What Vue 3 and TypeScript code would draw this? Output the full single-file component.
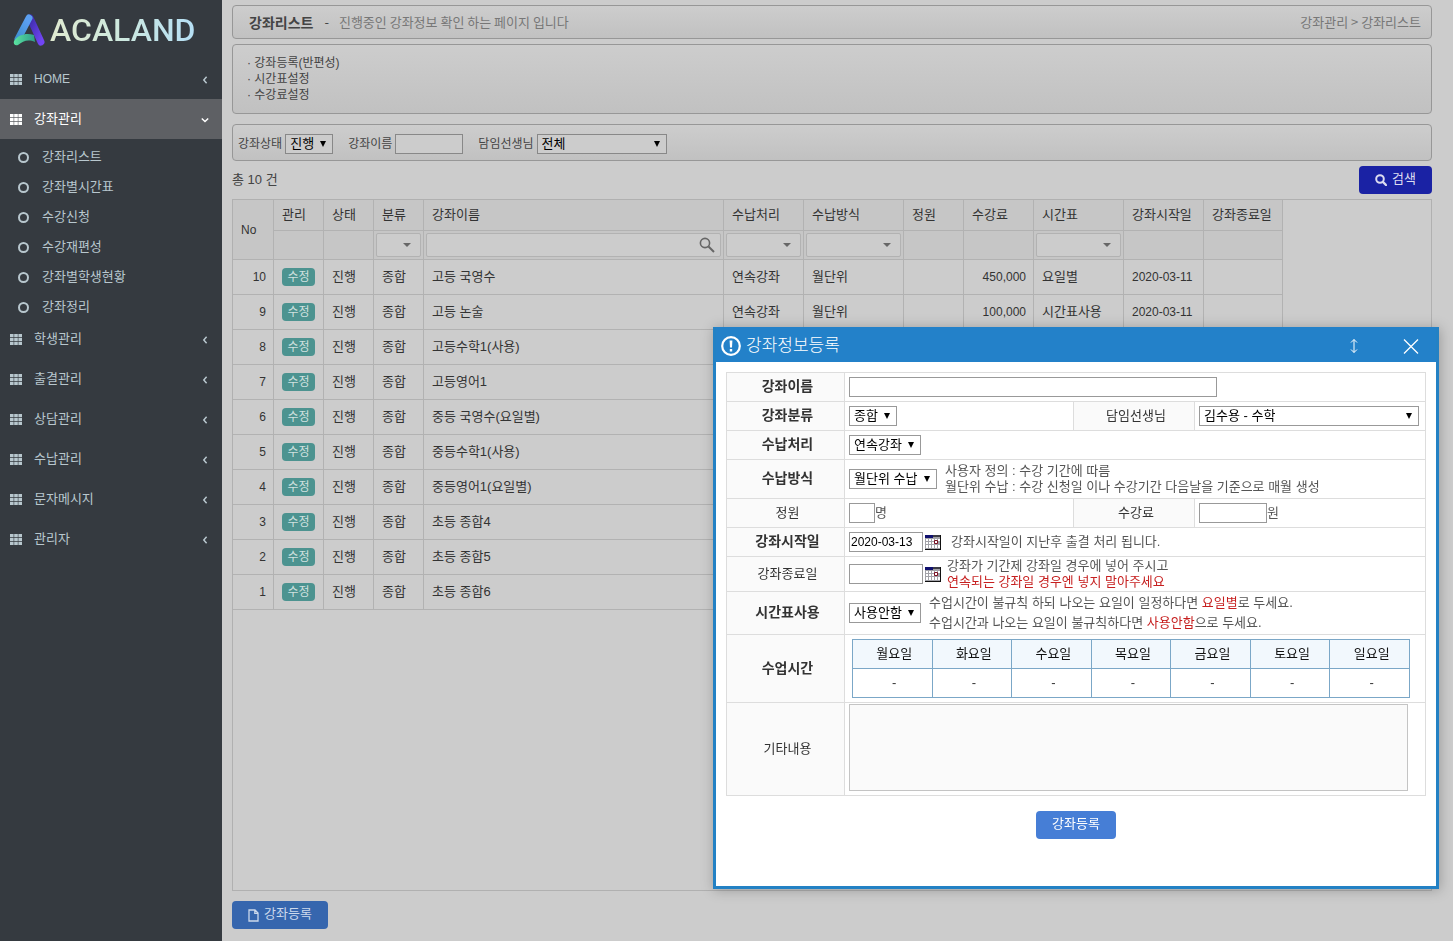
<script setup lang="ts">
import { ref } from 'vue'

interface MenuItem {
  label: string
  open?: boolean
  latin?: boolean
  children?: string[]
}

interface Course {
  no: number
  name: string
  process: string
  method: string
  fee: string
  timetable: string
  start: string
}

const menu: MenuItem[] = [
  { label: 'HOME', latin: true },
  {
    label: '강좌관리',
    open: true,
    children: ['강좌리스트', '강좌별시간표', '수강신청', '수강재편성', '강좌별학생현황', '강좌정리'],
  },
  { label: '학생관리' },
  { label: '출결관리' },
  { label: '상담관리' },
  { label: '수납관리' },
  { label: '문자메시지' },
  { label: '관리자' },
]

const course = (no: number, name: string, fee = '', timetable = ''): Course => ({
  no,
  name,
  process: '연속강좌',
  method: '월단위',
  fee,
  timetable,
  start: '2020-03-11',
})

const courses: Course[] = [
  course(10, '고등 국영수', '450,000', '요일별'),
  course(9, '고등 논술', '100,000', '시간표사용'),
  course(8, '고등수학1(사용)'),
  course(7, '고등영어1'),
  course(6, '중등 국영수(요일별)'),
  course(5, '중등수학1(사용)'),
  course(4, '중등영어1(요일별)'),
  course(3, '초등 종합4'),
  course(2, '초등 종합5'),
  course(1, '초등 종합6'),
]

const columns = [
  { title: '관리', filter: '' },
  { title: '상태', filter: '' },
  { title: '분류', filter: 'select' },
  { title: '강좌이름', filter: 'text' },
  { title: '수납처리', filter: 'select' },
  { title: '수납방식', filter: 'select' },
  { title: '정원', filter: '' },
  { title: '수강료', filter: '' },
  { title: '시간표', filter: 'select' },
  { title: '강좌시작일', filter: '' },
  { title: '강좌종료일', filter: '' },
]

const days = ['월요일', '화요일', '수요일', '목요일', '금요일', '토요일', '일요일']

const keyword = ref('')
const startDate = ref('2020-03-13')
const endDate = ref('')
</script>

<template>
  <div class="shell">
    <aside class="sidebar">
      <a class="brand" href="#">
        <svg class="brand-mark" viewBox="0 0 32 32" aria-hidden="true">
          <defs>
            <linearGradient id="markLeft" x1="0" y1="1" x2="0.6" y2="0">
              <stop offset="0" stop-color="#3f8fd0" />
              <stop offset="1" stop-color="#5b9ff0" />
            </linearGradient>
            <linearGradient id="markRight" x1="0" y1="0" x2="1" y2="1">
              <stop offset="0" stop-color="#3c2ca8" />
              <stop offset="1" stop-color="#7145f5" />
            </linearGradient>
            <linearGradient id="markBase" x1="0" y1="0" x2="1" y2="0">
              <stop offset="0" stop-color="#5be3a0" />
              <stop offset="1" stop-color="#2f9d8a" />
            </linearGradient>
          </defs>
          <path d="M17 4 L28 28" fill="none" stroke="url(#markRight)" stroke-width="7" stroke-linecap="round" />
          <path d="M16 4 L5 25" fill="none" stroke="url(#markLeft)" stroke-width="7" stroke-linecap="round" />
          <path d="M1 27 C6 20 14 19 21 21 L22 28 C15 25 10 27 5 31 C2 32 0 30 1 27 Z" fill="url(#markBase)" />
        </svg>
        <span class="brand-name">ACALAND</span>
      </a>
      <nav>
        <ul class="menu">
          <li v-for="item in menu" :key="item.label">
            <a class="menu-link" :class="{ active: item.open, latin: item.latin }" href="#">
              <svg class="grid-icon" viewBox="0 0 12 11" fill="currentColor" aria-hidden="true">
                <path d="M0 0h3.600v3.200H0zM4.200 0h3.600v3.200H4.200zM8.400 0H12v3.200H8.400zM0 3.900h3.600v3.200H0zM4.200 3.900h3.600v3.200H4.200zM8.400 3.900H12v3.200H8.400zM0 7.800h3.600V11H0zM4.200 7.800h3.600V11H4.200zM8.400 7.800H12V11H8.400z" />
              </svg>
              <span class="menu-text">{{ item.label }}</span>
              <svg class="chevron" viewBox="0 0 10 12" fill="none" stroke="currentColor" stroke-width="1.500" aria-hidden="true">
                <path :d="item.open ? 'M1.800 5.500 L5 8.500 L8.200 5.500' : 'M6.600 3.800 L3.800 7 L6.600 10.200'" />
              </svg>
            </a>
            <ul v-if="item.children" class="submenu">
              <li v-for="child in item.children" :key="child">
                <a class="submenu-link" href="#"><i class="ring"></i>{{ child }}</a>
              </li>
            </ul>
          </li>
        </ul>
      </nav>
    </aside>

    <main class="main">
      <header class="panel title-panel">
        <h1>강좌리스트</h1>
        <span class="dash">-</span>
        <p>진행중인 강좌정보 확인 하는 페이지 입니다</p>
        <div class="crumbs">강좌관리 &gt; 강좌리스트</div>
      </header>

      <ul class="panel notes">
        <li>· 강좌등록(반편성)</li>
        <li>· 시간표설정</li>
        <li>· 수강료설정</li>
      </ul>

      <form class="panel search-panel" @submit.prevent>
        <div class="field">
          <label for="state">강좌상태</label>
          <span class="select w48"><select id="state"><option>진행</option></select></span>
        </div>
        <div class="field">
          <label for="keyword">강좌이름</label>
          <input id="keyword" v-model="keyword" class="w68" type="text" />
        </div>
        <div class="field">
          <label for="teacher">담임선생님</label>
          <span class="select w130"><select id="teacher"><option>전체</option></select></span>
        </div>
      </form>

      <div class="count-row">
        <span>총 10 건</span>
        <button class="btn btn-search" type="button">
          <svg viewBox="0 0 12 12" width="12" height="12" fill="none" stroke="currentColor" aria-hidden="true">
            <circle cx="5" cy="5" r="3.800" stroke-width="2" />
            <path d="M8 8 L11 11" stroke-width="2.400" stroke-linecap="round" />
          </svg>
          <span>검색</span>
        </button>
      </div>

      <section class="grid-box">
        <table class="grid">
          <colgroup>
            <col class="c41" /><col class="c50" /><col class="c50" /><col class="c50" /><col class="c300" />
            <col class="c80" /><col class="c100" /><col class="c60" /><col class="c70" /><col class="c90" />
            <col class="c80" /><col />
          </colgroup>
          <thead>
            <tr class="head-row">
              <th rowspan="2">No</th>
              <th v-for="c in columns" :key="c.title">{{ c.title }}</th>
            </tr>
            <tr class="filter-row">
              <td v-for="c in columns" :key="c.title">
                <span v-if="c.filter === 'select'" class="filter-select">
                  <select :aria-label="c.title"><option></option></select>
                </span>
                <span v-else-if="c.filter === 'text'" class="filter-text">
                  <input type="text" :aria-label="c.title" />
                  <svg viewBox="0 0 16 16" width="16" height="16" fill="none" stroke="currentColor" aria-hidden="true">
                    <circle cx="6" cy="6" r="4.600" stroke-width="1.600" />
                    <path d="M9.500 9.500 L15 15" stroke-width="2" />
                  </svg>
                </span>
              </td>
            </tr>
          </thead>
          <tbody>
            <tr v-for="row in courses" :key="row.no">
              <td class="num">{{ row.no }}</td>
              <td><button class="edit" type="button">수정</button></td>
              <td>진행</td>
              <td>종합</td>
              <td>{{ row.name }}</td>
              <td>{{ row.process }}</td>
              <td>{{ row.method }}</td>
              <td></td>
              <td class="num">{{ row.fee }}</td>
              <td>{{ row.timetable }}</td>
              <td class="date">{{ row.start }}</td>
              <td></td>
            </tr>
          </tbody>
        </table>
      </section>

      <button class="btn btn-add" type="button">
        <svg viewBox="0 0 11 13" width="11" height="13" fill="none" stroke="currentColor" stroke-width="1.300" aria-hidden="true">
          <path d="M1 1 H7 L10 4 V12 H1 Z M6.800 1 V4.300 H10" />
        </svg>
        <span>강좌등록</span>
      </button>
    </main>

    <section class="dialog" role="dialog" aria-labelledby="dialog-title">
      <header class="dialog-head">
        <svg class="alert" viewBox="0 0 20 20" fill="none" stroke="currentColor" aria-hidden="true">
          <circle cx="10" cy="10" r="8.800" stroke-width="2.200" />
          <path d="M8.600 4.500 H11.400 L11 11.500 H9 Z M8.800 13 h2.400 v2.400 h-2.400 Z" fill="currentColor" stroke="none" />
        </svg>
        <h2 id="dialog-title">강좌정보등록</h2>
        <button class="head-btn resize" type="button" aria-label="크기 조절">
          <svg viewBox="0 0 10 16" width="10" height="16" fill="none" stroke="currentColor" aria-hidden="true">
            <path d="M5 1.500 V14.500 M2 4.500 L5 1.500 L8 4.500 M2 11.500 L5 14.500 L8 11.500" />
          </svg>
        </button>
        <button class="head-btn" type="button" aria-label="닫기">
          <svg viewBox="0 0 16 16" width="16" height="16" fill="none" stroke="currentColor" stroke-width="1.300" aria-hidden="true">
            <path d="M1 1.500 L15 15.500 M15 1.500 L1 15.500" />
          </svg>
        </button>
      </header>

      <form class="dialog-body" @submit.prevent>
        <table class="form">
          <colgroup><col class="f118" /><col class="f229" /><col class="f121" /><col /></colgroup>
          <tbody>
            <tr class="h29">
              <th class="req"><label for="f-name">강좌이름</label></th>
              <td colspan="3"><div class="line"><input id="f-name" class="w368" type="text" /></div></td>
            </tr>
            <tr class="h29">
              <th class="req"><label for="f-type">강좌분류</label></th>
              <td><div class="line"><span class="select w48"><select id="f-type"><option>종합</option></select></span></div></td>
              <th><label for="f-teacher">담임선생님</label></th>
              <td><div class="line"><span class="select w220"><select id="f-teacher"><option>김수용 - 수학</option></select></span></div></td>
            </tr>
            <tr class="h29">
              <th class="req"><label for="f-process">수납처리</label></th>
              <td colspan="3"><div class="line"><span class="select w72"><select id="f-process"><option>연속강좌</option></select></span></div></td>
            </tr>
            <tr class="h39">
              <th class="req"><label for="f-method">수납방식</label></th>
              <td colspan="3">
                <div class="line gap8">
                  <span class="select w88"><select id="f-method"><option>월단위 수납</option></select></span>
                  <p>사용자 정의 : 수강 기간에 따름<br />월단위 수납 : 수강 신청일 이나 수강기간 다음날을 기준으로 매월 생성</p>
                </div>
              </td>
            </tr>
            <tr class="h29">
              <th><label for="f-seats">정원</label></th>
              <td><div class="line"><input id="f-seats" class="w26" type="text" />명</div></td>
              <th><label for="f-fee">수강료</label></th>
              <td><div class="line"><input id="f-fee" class="w68" type="text" />원</div></td>
            </tr>
            <tr class="h29">
              <th class="req"><label for="f-start">강좌시작일</label></th>
              <td colspan="3">
                <div class="line gap2">
                  <input id="f-start" v-model="startDate" class="w74" type="text" />
                  <button class="cal" type="button" aria-label="시작일 선택">
                    <svg viewBox="0 0 16 15" width="16" height="15" aria-hidden="true">
                      <path d="M0 0h16v15H0z" fill="#a2a2a8" />
                      <path d="M1 4h2v2H1zM4 4h2v2H4zM7 4h2v2H7zM10 4h2v2h-2zM13 4h2v2h-2zM1 7h2v2H1zM4 7h2v2H4zM7 7h2v2H7zM1 10h2v3H1zM4 10h2v3H4zM7 10h2v3H7zM10 10h2v3h-2zM13 10h2v3h-2z" fill="#fff" />
                      <path d="M0 0h8v3H0z" fill="#10106e" />
                      <path d="M8 0h8v2H8z" fill="#3c3c44" />
                      <path d="M15 0h1v15H0v-1h15z" fill="#111" />
                      <path d="M9.500 5.500h3v3h-3z" fill="#fff" stroke="#7a1022" />
                    </svg>
                  </button>
                  <p class="push">강좌시작일이 지난후 출결 처리 됩니다.</p>
                </div>
              </td>
            </tr>
            <tr class="h35">
              <th><label for="f-end">강좌종료일</label></th>
              <td colspan="3">
                <div class="line gap2">
                  <input id="f-end" v-model="endDate" class="w74" type="text" />
                  <button class="cal" type="button" aria-label="종료일 선택">
                    <svg viewBox="0 0 16 15" width="16" height="15" aria-hidden="true">
                      <path d="M0 0h16v15H0z" fill="#a2a2a8" />
                      <path d="M1 4h2v2H1zM4 4h2v2H4zM7 4h2v2H7zM10 4h2v2h-2zM13 4h2v2h-2zM1 7h2v2H1zM4 7h2v2H4zM7 7h2v2H7zM1 10h2v3H1zM4 10h2v3H4zM7 10h2v3H7zM10 10h2v3h-2zM13 10h2v3h-2z" fill="#fff" />
                      <path d="M0 0h8v3H0z" fill="#10106e" />
                      <path d="M8 0h8v2H8z" fill="#3c3c44" />
                      <path d="M15 0h1v15H0v-1h15z" fill="#111" />
                      <path d="M9.500 5.500h3v3h-3z" fill="#fff" stroke="#7a1022" />
                    </svg>
                  </button>
                  <p class="near">강좌가 기간제 강좌일 경우에 넣어 주시고<br /><em>연속되는 강좌일 경우엔 넣지 말아주세요</em></p>
                </div>
              </td>
            </tr>
            <tr class="h43">
              <th class="req"><label for="f-table">시간표사용</label></th>
              <td colspan="3">
                <div class="line gap8">
                  <span class="select w72"><select id="f-table"><option>사용안함</option></select></span>
                  <p class="loose">수업시간이 불규칙 하되 나오는 요일이 일정하다면 <em>요일별</em>로 두세요.<br />수업시간과 나오는 요일이 불규칙하다면 <em>사용안함</em>으로 두세요.</p>
                </div>
              </td>
            </tr>
            <tr class="h68">
              <th class="req">수업시간</th>
              <td colspan="3">
                <table class="week">
                  <thead>
                    <tr><th v-for="d in days" :key="d">{{ d }}</th></tr>
                  </thead>
                  <tbody>
                    <tr><td v-for="d in days" :key="d">-</td></tr>
                  </tbody>
                </table>
              </td>
            </tr>
            <tr class="h93">
              <th><label for="f-memo">기타내용</label></th>
              <td colspan="3" class="memo"><textarea id="f-memo"></textarea></td>
            </tr>
          </tbody>
        </table>
        <button class="btn btn-submit" type="submit"><span>강좌등록</span></button>
      </form>
    </section>
  </div>
</template>

<style>
body {
  margin: 0;
  background: #ccc;
}
</style>

<style scoped>
* {
  box-sizing: border-box;
}
.shell {
  display: grid;
  grid-template-columns: 222px minmax(0, 1fr);
  min-height: 100vh;
  font-family: "Liberation Sans", "Noto Sans CJK KR", sans-serif;
  font-size: 13px;
  line-height: 16px;
  color: #333;
}
ul, h1, h2, p {
  margin: 0;
  padding: 0;
  list-style: none;
}
a {
  text-decoration: none;
}
button, input, select, textarea {
  margin: 0;
  font-family: inherit;
  font-size: 13px;
}

/* sidebar */
.sidebar {
  background: #353a40;
}
.brand {
  display: flex;
  align-items: center;
  gap: 5px;
  height: 59px;
  padding-left: 13px;
}
.brand-mark {
  width: 32px;
  height: 32px;
}
.brand-name {
  font-family: Roboto, sans-serif;
  font-size: 32px;
  font-weight: 500;
  line-height: 40px;
  color: transparent;
  background: linear-gradient(90deg, #e0ead0, #cfe9dd 45%, #b5dff5);
  background-clip: text;
  -webkit-background-clip: text;
}
.menu-link {
  display: flex;
  align-items: center;
  height: 40px;
  padding: 0 12px 0 10px;
  color: #b8c7ce;
}
.menu-link.active {
  background: #5e6064;
  color: #fff;
}
.menu-link.latin .menu-text {
  font-size: 12px;
}
.grid-icon {
  width: 12px;
  height: 11px;
}
.menu-text {
  flex: 1;
  padding-left: 12px;
}
.chevron {
  width: 10px;
  height: 12px;
}
.submenu {
  padding-top: 3px;
  margin-bottom: -3px;
}
.submenu-link {
  display: flex;
  align-items: center;
  gap: 13px;
  height: 30px;
  padding-left: 18px;
  color: #b8c7ce;
}
.ring {
  width: 11px;
  height: 11px;
  border: 2px solid #b8c7ce;
  border-radius: 50%;
}

/* page */
.main {
  display: flex;
  flex-direction: column;
  padding: 5px 21px 12px 10px;
}
.panel {
  border: 1px solid #979797;
  border-radius: 4px;
  background: linear-gradient(#cdcdcd, #c1c1c1);
}
.title-panel {
  display: flex;
  align-items: center;
  height: 34px;
  padding: 0 10px 0 16px;
  font-family: "Noto Sans CJK KR", sans-serif;
  color: #777;
}
.title-panel h1 {
  font-size: 14px;
  color: #444;
}
.dash {
  padding: 0 10px 0 11px;
  color: #444;
}
.crumbs {
  margin-left: auto;
}
.notes {
  height: 70px;
  margin-top: 5px;
  padding: 10px 14px;
  font-size: 12px;
  color: #444;
}
.search-panel {
  display: flex;
  align-items: center;
  gap: 15px;
  height: 37px;
  margin-top: 10px;
  padding: 2px 5px 0;
  font-size: 12px;
  color: #444;
}
.search-panel .select, .search-panel input[type="text"] {
  background: #ccc;
  border-color: #888;
}
.field {
  display: flex;
  align-items: center;
  gap: 3px;
}
.count-row {
  display: flex;
  align-items: center;
  justify-content: space-between;
  padding: 5px 0;
  color: #444;
}

.btn {
  display: inline-flex;
  align-items: center;
  justify-content: center;
  gap: 5px;
  height: 28px;
  padding: 0;
  border: 0;
  border-radius: 4px;
  color: #fff;
}
.btn span {
  padding-bottom: 3px;
  line-height: 16px;
}
.btn-search {
  width: 73px;
  background: #1a22a4;
  color: #dcdcf0;
}
.btn-add {
  align-self: flex-start;
  width: 96px;
  margin-top: 10px;
  background: #3666ae;
  color: #ccd9ec;
}

/* form controls */
input[type="text"] {
  height: 20px;
  padding: 0 1px;
  border: 1px solid #999;
  border-radius: 0;
  background: #fff;
  font-size: 12px;
  color: #000;
  outline: 0;
}
.select {
  position: relative;
  display: inline-block;
  flex: none;
  height: 20px;
  border: 1px solid #999;
  background: #fff;
}
.select select {
  display: block;
  width: 100%;
  height: 18px;
  padding: 0 14px 0 4px;
  border: 0;
  appearance: none;
  background: transparent;
  color: #000;
  line-height: 18px;
}
.select::after {
  content: "";
  position: absolute;
  top: 6px;
  right: 6px;
  border: 3px solid transparent;
  border-top: 6px solid #000;
  border-bottom: 0;
  pointer-events: none;
}
.w26 { width: 26px; }
.w48 { width: 48px; }
.w68 { width: 68px; }
.w72 { width: 72px; }
.w74 { width: 74px; }
.w88 { width: 88px; }
.w130 { width: 130px; }
.w220 { width: 220px; }
.w368 { width: 368px; }

/* course grid */
.grid-box {
  flex: 1;
  border: 1px solid #b0b0b0;
}
.grid {
  width: 1050px;
  table-layout: fixed;
  border-collapse: separate;
  border-spacing: 0;
}
.grid th, .grid td {
  padding: 0 8px;
  border-right: 1px solid #b2b2b2;
  border-bottom: 1px solid #b2b2b2;
  text-align: left;
  font-weight: 400;
  white-space: nowrap;
}
.grid thead {
  background: #c6c6c6;
}
.head-row {
  height: 31px;
}
.grid .filter-row td {
  height: 29px;
  padding: 2px;
}
.grid tbody td {
  height: 35px;
}
.grid .num {
  padding-right: 7px;
  text-align: right;
  font-size: 12px;
}
.grid .date, .grid th[rowspan] {
  font-size: 12px;
}
.c41 { width: 41px; }
.c50 { width: 50px; }
.c60 { width: 60px; }
.c70 { width: 70px; }
.c80 { width: 80px; }
.c90 { width: 90px; }
.c100 { width: 100px; }
.c300 { width: 300px; }
.filter-select, .filter-text {
  position: relative;
  display: flex;
  align-items: center;
  height: 24px;
  border: 1px solid #b2b2b2;
  border-radius: 2px;
  background: #ccc;
  color: #666;
}
.filter-select select {
  width: 100%;
  height: 22px;
  border: 0;
  appearance: none;
  background: transparent;
}
.filter-select::after {
  content: "";
  position: absolute;
  top: 9px;
  right: 9px;
  border: 4px solid transparent;
  border-top-color: #666;
  border-bottom: 0;
  pointer-events: none;
}
.filter-text {
  padding-right: 5px;
}
.filter-text input[type="text"] {
  flex: 1;
  min-width: 0;
  border: 0;
  background: transparent;
}
.edit {
  display: block;
  width: 33px;
  height: 18px;
  padding: 0;
  border: 0;
  border-radius: 4px;
  background: #4c9390;
  color: #cfe0df;
  font-size: 12px;
  line-height: 18px;
}

/* dialog */
.dialog {
  position: fixed;
  top: 327px;
  right: 14px;
  width: 726px;
  max-width: calc(100vw - 28px);
  border: 3px solid #2381c4;
  border-top: 0;
  background: #fff;
  box-shadow: 1px 1px 12px rgba(0, 0, 0, 0.25);
}
.dialog-head {
  display: flex;
  align-items: center;
  height: 35px;
  padding: 2px 17px 0 5px;
  background: #2381c9;
  color: #fff;
}
.dialog-head h2 {
  flex: 1;
  padding-left: 5px;
  font-size: 17px;
  font-weight: 300;
  line-height: 24px;
}
.alert {
  width: 20px;
  height: 20px;
}
.head-btn {
  display: flex;
  padding: 0;
  border: 0;
  background: none;
  color: #fff;
}
.resize {
  margin-right: 44px;
}
.dialog-body {
  display: flex;
  flex-direction: column;
  align-items: center;
  padding: 10px 10px 47px;
}
.form {
  width: 100%;
  table-layout: fixed;
  border-collapse: collapse;
}
.form > tbody > tr > th, .form > tbody > tr > td {
  padding: 0 4px;
  border: 1px solid #ddd;
  font-weight: 400;
}
.form > tbody > tr > th {
  padding-right: 0;
  background: #fafafa;
  text-align: center;
}
.form > tbody > tr > th.req {
  padding-bottom: 2px;
  font-size: 14px;
  font-weight: 700;
}
.f118 { width: 118px; }
.f229 { width: 229px; }
.f121 { width: 121px; }
.h29 { height: 29px; }
.h35 { height: 35px; }
.h39 { height: 39px; }
.h43 { height: 43px; }
.h68 { height: 68px; }
.h93 { height: 93px; }
.line {
  display: flex;
  align-items: center;
  color: #555;
  white-space: nowrap;
}
.gap2 { gap: 2px; }
.gap8 { gap: 8px; }
.push { padding-left: 8px; }
.near { padding-left: 4px; }
.loose { line-height: 20px; }
.line em {
  font-style: normal;
  color: #c61f1f;
}
.cal {
  display: block;
  padding: 0;
  border: 0;
  background: none;
  line-height: 0;
}
.week {
  width: 558px;
  margin-left: 3px;
  table-layout: fixed;
  border-collapse: collapse;
}
.week th, .week td {
  height: 29px;
  padding: 0 0 0 4px;
  border: 1px solid #7ba7c7;
  text-align: center;
  font-weight: 400;
}
.week th {
  background: #f2f8fd;
  color: #111;
}
.form > tbody > tr > td.memo {
  vertical-align: top;
  padding-top: 1px;
}
textarea {
  display: block;
  width: 559px;
  height: 87px;
  border: 1px solid #c4c4c4;
  background: #fafafa;
  resize: none;
}
.btn-submit {
  width: 80px;
  margin-top: 15px;
  background: #467ed6;
}
</style>
